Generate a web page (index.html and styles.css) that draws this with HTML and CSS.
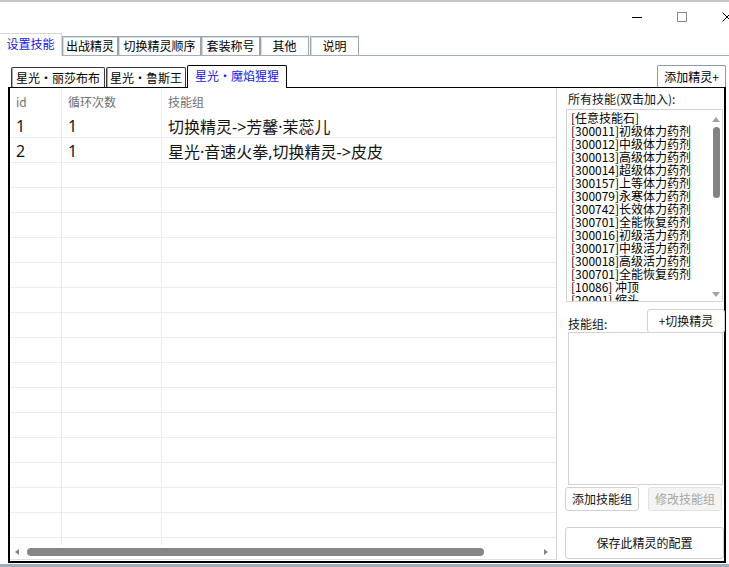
FILE: index.html
```html
<!DOCTYPE html>
<html lang="zh-CN">
<head>
<meta charset="utf-8">
<title>设置技能</title>
<link rel="stylesheet" href="styles.css">
</head>
<body>
<div class="window">
  <div class="titlebar">
    <div class="controls">
      <div class="ctl"><svg width="12" height="12" viewBox="0 0 12 12"><line x1="1" y1="6.5" x2="11" y2="6.5" stroke="#000" stroke-width="1"/></svg></div>
      <div class="ctl"><svg width="12" height="12" viewBox="0 0 12 12"><rect x="1.5" y="1.5" width="9" height="9" fill="none" stroke="#8a8a8a" stroke-width="1"/></svg></div>
      <div class="ctl"><svg width="12" height="12" viewBox="0 0 12 12"><path d="M1.5 1.5 L10.5 10.5 M10.5 1.5 L1.5 10.5" stroke="#000" stroke-width="1"/></svg></div>
    </div>
  </div>

  <div class="maintabs">
    <div class="mtab active">设置技能</div>
    <div class="mtab w56">出战精灵</div>
    <div class="mtab w83">切换精灵顺序</div>
    <div class="mtab w59">套装称号</div>
    <div class="mtab w49">其他</div>
    <div class="mtab w49 gap2">说明</div>
  </div>

  <div class="subbar">
    <div class="stab w94">星光・丽莎布布</div>
    <div class="stab w80">星光・鲁斯王</div>
    <div class="stab w100 active">星光・魔焰猩猩</div>
    <div class="addbtn">添加精灵+</div>
  </div>

  <div class="panel">
    <div class="grid">
      <div class="row head">
        <div class="cell">id</div>
        <div class="cell">循环次数</div>
        <div class="cell">技能组</div>
      </div>
      <div class="body">
        <div class="row"><div class="cell">1</div><div class="cell">1</div><div class="cell">切换精灵-&gt;芳馨·茉蕊儿</div></div>
        <div class="row"><div class="cell">2</div><div class="cell">1</div><div class="cell">星光·音速火拳,切换精灵-&gt;皮皮</div></div>
        <div class="row"><div class="cell"></div><div class="cell"></div><div class="cell"></div></div>
        <div class="row"><div class="cell"></div><div class="cell"></div><div class="cell"></div></div>
        <div class="row"><div class="cell"></div><div class="cell"></div><div class="cell"></div></div>
        <div class="row"><div class="cell"></div><div class="cell"></div><div class="cell"></div></div>
        <div class="row"><div class="cell"></div><div class="cell"></div><div class="cell"></div></div>
        <div class="row"><div class="cell"></div><div class="cell"></div><div class="cell"></div></div>
        <div class="row"><div class="cell"></div><div class="cell"></div><div class="cell"></div></div>
        <div class="row"><div class="cell"></div><div class="cell"></div><div class="cell"></div></div>
        <div class="row"><div class="cell"></div><div class="cell"></div><div class="cell"></div></div>
        <div class="row"><div class="cell"></div><div class="cell"></div><div class="cell"></div></div>
        <div class="row"><div class="cell"></div><div class="cell"></div><div class="cell"></div></div>
        <div class="row"><div class="cell"></div><div class="cell"></div><div class="cell"></div></div>
        <div class="row"><div class="cell"></div><div class="cell"></div><div class="cell"></div></div>
        <div class="row"><div class="cell"></div><div class="cell"></div><div class="cell"></div></div>
        <div class="row"><div class="cell"></div><div class="cell"></div><div class="cell"></div></div>
        <div class="row"><div class="cell"></div><div class="cell"></div><div class="cell"></div></div>
      </div>
      <div class="hscroll">
        <span class="arrow-left"></span>
        <span class="hthumb"></span>
        <span class="arrow-right"></span>
      </div>
    </div>

    <div class="side">
      <div class="label">所有技能(双击加入):</div>
      <div class="listbox">
        <div class="items">
          <div>[任意技能石]</div>
          <div>[300011]初级体力药剂</div>
          <div>[300012]中级体力药剂</div>
          <div>[300013]高级体力药剂</div>
          <div>[300014]超级体力药剂</div>
          <div>[300157]上等体力药剂</div>
          <div>[300079]永寒体力药剂</div>
          <div>[300742]长效体力药剂</div>
          <div>[300701]全能恢复药剂</div>
          <div>[300016]初级活力药剂</div>
          <div>[300017]中级活力药剂</div>
          <div>[300018]高级活力药剂</div>
          <div>[300701]全能恢复药剂</div>
          <div>[10086] 冲顶</div>
          <div>[20001] 缩头</div>
        </div>
        <div class="vscroll">
          <span class="arrow-up"></span>
          <span class="vthumb"></span>
          <span class="arrow-down"></span>
        </div>
      </div>
      <div class="grouprow">
        <div class="label2">技能组:</div>
        <div class="btn switchbtn">+切换精灵</div>
      </div>
      <div class="textarea"></div>
      <div class="btnrow">
        <div class="btn addgrp">添加技能组</div>
        <div class="btn editgrp disabled">修改技能组</div>
      </div>
      <div class="btn save">保存此精灵的配置</div>
    </div>
  </div>
  <div class="bottomline"></div>
</div>
</body>
</html>
```

FILE: styles.css
```css
html, body {
  margin: 0;
  padding: 0;
  background: #ffffff;
  overflow: hidden;
}
body {
  width: 729px;
  height: 567px;
  font-family: "Noto Sans CJK SC", "Microsoft YaHei", sans-serif;
  font-size: 12px;
  color: #000;
}
.window {
  width: 729px;
  height: 567px;
  display: flex;
  flex-direction: column;
}

/* title bar */
.titlebar {
  height: 31px;
  border-top: 2px solid #c6c6c6;
  display: flex;
  justify-content: flex-end;
}
.controls {
  display: flex;
  margin-right: -20px;
  flex-shrink: 0;
}
.ctl {
  width: 45px;
  height: 30px;
  display: flex;
  align-items: center;
  justify-content: center;
}
.ctl svg { display: block; }

/* main tabs */
.maintabs {
  height: 22px;
  border-bottom: 1px solid #a3afb8;
  display: flex;
  align-items: flex-end;
}
.mtab {
  height: 19px;
  box-sizing: border-box;
  border: 1px solid #98a6b1;
  border-bottom: none;
  box-shadow: inset 1px 1px 0 #d6dde2;
  display: flex;
  align-items: center;
  justify-content: center;
  line-height: 14px;
  background: #fff;
}
.mtab.active {
  width: 62px;
  height: 23px;
  margin-bottom: -1px;
  border: none;
  border-top: 1px solid #d3dade;
  border-right: 1px solid #d3dade;
  box-shadow: none;
  color: #1616f0;
  padding-bottom: 2px;
  position: relative;
  z-index: 1;
}
.w56 { width: 56px; }
.w83 { width: 83px; }
.w59 { width: 59px; }
.w49 { width: 49px; }
.gap2 { margin-left: 1px; }

/* sub tabs */
.subbar {
  height: 31px;
  display: flex;
  align-items: flex-end;
  padding-left: 11px;
}
.stab {
  height: 20px;
  box-sizing: border-box;
  border: 1px solid #3a3a3a;
  border-bottom: none;
  border-radius: 2px 2px 0 0;
  box-shadow: inset 1px 0 0 #a8a8a8;
  display: flex;
  align-items: center;
  justify-content: center;
  line-height: 14px;
  margin-right: 1px;
  background: #fff;
}
.stab.active {
  height: 23px;
  margin-bottom: -1px;
  border-color: #000;
  color: #1616f0;
  box-shadow: none;
  position: relative;
  z-index: 1;
  padding-bottom: 2px;
}
.w94 { width: 94px; }
.w80 { width: 80px; }
.w100 { width: 100px; }
.addbtn {
  margin-left: auto;
  margin-right: 3px;
  margin-bottom: 0;
  width: 69px;
  height: 22px;
  box-sizing: border-box;
  border: 1px solid #8a9aa6;
  border-bottom: none;
  border-radius: 2px 2px 0 0;
  display: flex;
  align-items: center;
  justify-content: center;
  padding-bottom: 1px;
}

/* panel */
.panel {
  margin-left: 8px;
  width: 718px;
  height: 476px;
  box-sizing: border-box;
  border: 2px solid #000;
  border-top: 1px solid #000;
  display: flex;
  padding-bottom: 2px;
}
.grid {
  width: 547px;
  height: 472px;
  box-sizing: border-box;
  border-right: 1px solid #d4d4d4;
  border-bottom: 1px solid #e0e0e0;
  display: flex;
  flex-direction: column;
}
.row {
  display: grid;
  grid-template-columns: 52px 100px 1fr;
  height: 25px;
  box-sizing: border-box;
  border-bottom: 1px solid #ebebeb;
  flex-shrink: 0;
}
.row.head {
  border-bottom: none;
}
.cell {
  border-right: 1px solid #ebebeb;
  box-sizing: border-box;
  padding-left: 6px;
  display: flex;
  align-items: center;
  font-family: "Noto Sans", "Noto Sans CJK SC", sans-serif;
  font-size: 16px;
  color: #141414;
  white-space: nowrap;
  padding-top: 1px;
}
.row.head .cell {
  font-family: "Noto Sans CJK SC", sans-serif;
  font-size: 12px;
  color: #707070;
  border-right-color: #f0f0f0;
  padding-top: 2px;
}
.cell:last-child { border-right: none; }
.body {
  flex: 1;
  overflow: hidden;
  display: flex;
  flex-direction: column;
}
.hscroll {
  height: 13px;
  display: flex;
  align-items: center;
  padding-left: 5px;
  flex-shrink: 0;
  padding-bottom: 1px;
}
.arrow-left {
  width: 0; height: 0;
  border-top: 3.5px solid transparent;
  border-bottom: 3.5px solid transparent;
  border-right: 4px solid #858585;
}
.hthumb {
  margin-left: 8px;
  width: 457px;
  height: 8px;
  border-radius: 4px;
  background: #858585;
}
.arrow-right {
  margin-left: 60px;
  width: 0; height: 0;
  border-top: 3.5px solid transparent;
  border-bottom: 3.5px solid transparent;
  border-left: 4px solid #858585;
}

/* side */
.side {
  width: 167px;
  display: flex;
  flex-direction: column;
}
.label {
  margin-top: 4px;
  padding-left: 11px;
  line-height: 14px;
  height: 14px;
  color: #111;
}
.listbox {
  margin-top: 3px;
  margin-left: 9px;
  width: 157px;
  height: 194px;
  box-sizing: border-box;
  border: 1px solid #d2d2d2;
  display: flex;
  overflow: hidden;
}
.items {
  flex: 1;
  padding-left: 4px;
  padding-top: 1px;
  font-size: 12px;
  line-height: 13px;
  white-space: nowrap;
  overflow: hidden;
  color: #000;
}
.vscroll {
  width: 12px;
  display: flex;
  flex-direction: column;
  align-items: center;
  padding-top: 7px;
  padding-bottom: 4px;
  box-sizing: border-box;
}
.arrow-up {
  width: 0; height: 0;
  border-left: 4.5px solid transparent;
  border-right: 4.5px solid transparent;
  border-bottom: 5px solid #a3a3a3;
}
.vthumb {
  margin-top: 5px;
  width: 7px;
  height: 71px;
  border-radius: 3.5px;
  background: #828282;
}
.arrow-down {
  margin-top: auto;
  width: 0; height: 0;
  border-left: 4.5px solid transparent;
  border-right: 4.5px solid transparent;
  border-top: 5px solid #a3a3a3;
}
.grouprow {
  margin-top: 7px;
  height: 24px;
  display: flex;
  justify-content: space-between;
  align-items: flex-end;
}
.label2 {
  padding-left: 11px;
  line-height: 14px;
  margin-bottom: 2px;
  color: #111;
}
.btn {
  box-sizing: border-box;
  border: 1px solid #cfcfcf;
  border-radius: 3px;
  background: #fff;
  display: flex;
  align-items: center;
  justify-content: center;
  color: #111;
  line-height: 14px;
}
.switchbtn {
  width: 78px;
  height: 24px;
  margin-right: -1px;
}
.textarea {
  margin-left: 11px;
  width: 155px;
  height: 154px;
  box-sizing: border-box;
  border: 1px solid #d2d2d2;
  margin-top: -1px;
}
.btnrow {
  margin-top: 2px;
  height: 24px;
  display: flex;
  padding-left: 8px;
}
.addgrp { width: 74px; height: 24px; }
.editgrp { width: 74px; height: 24px; margin-left: 9px; }
.btn.disabled {
  color: #a6a6a6;
  background: #f4f4f4;
  border-color: #e2e2e2;
}
.save {
  margin-top: 16px;
  margin-left: 8px;
  width: 159px;
  height: 32px;
  font-size: 12px;
}
.bottomline {
  margin-top: 1px;
  height: 3px;
  background: #a3afb8;
}
```
